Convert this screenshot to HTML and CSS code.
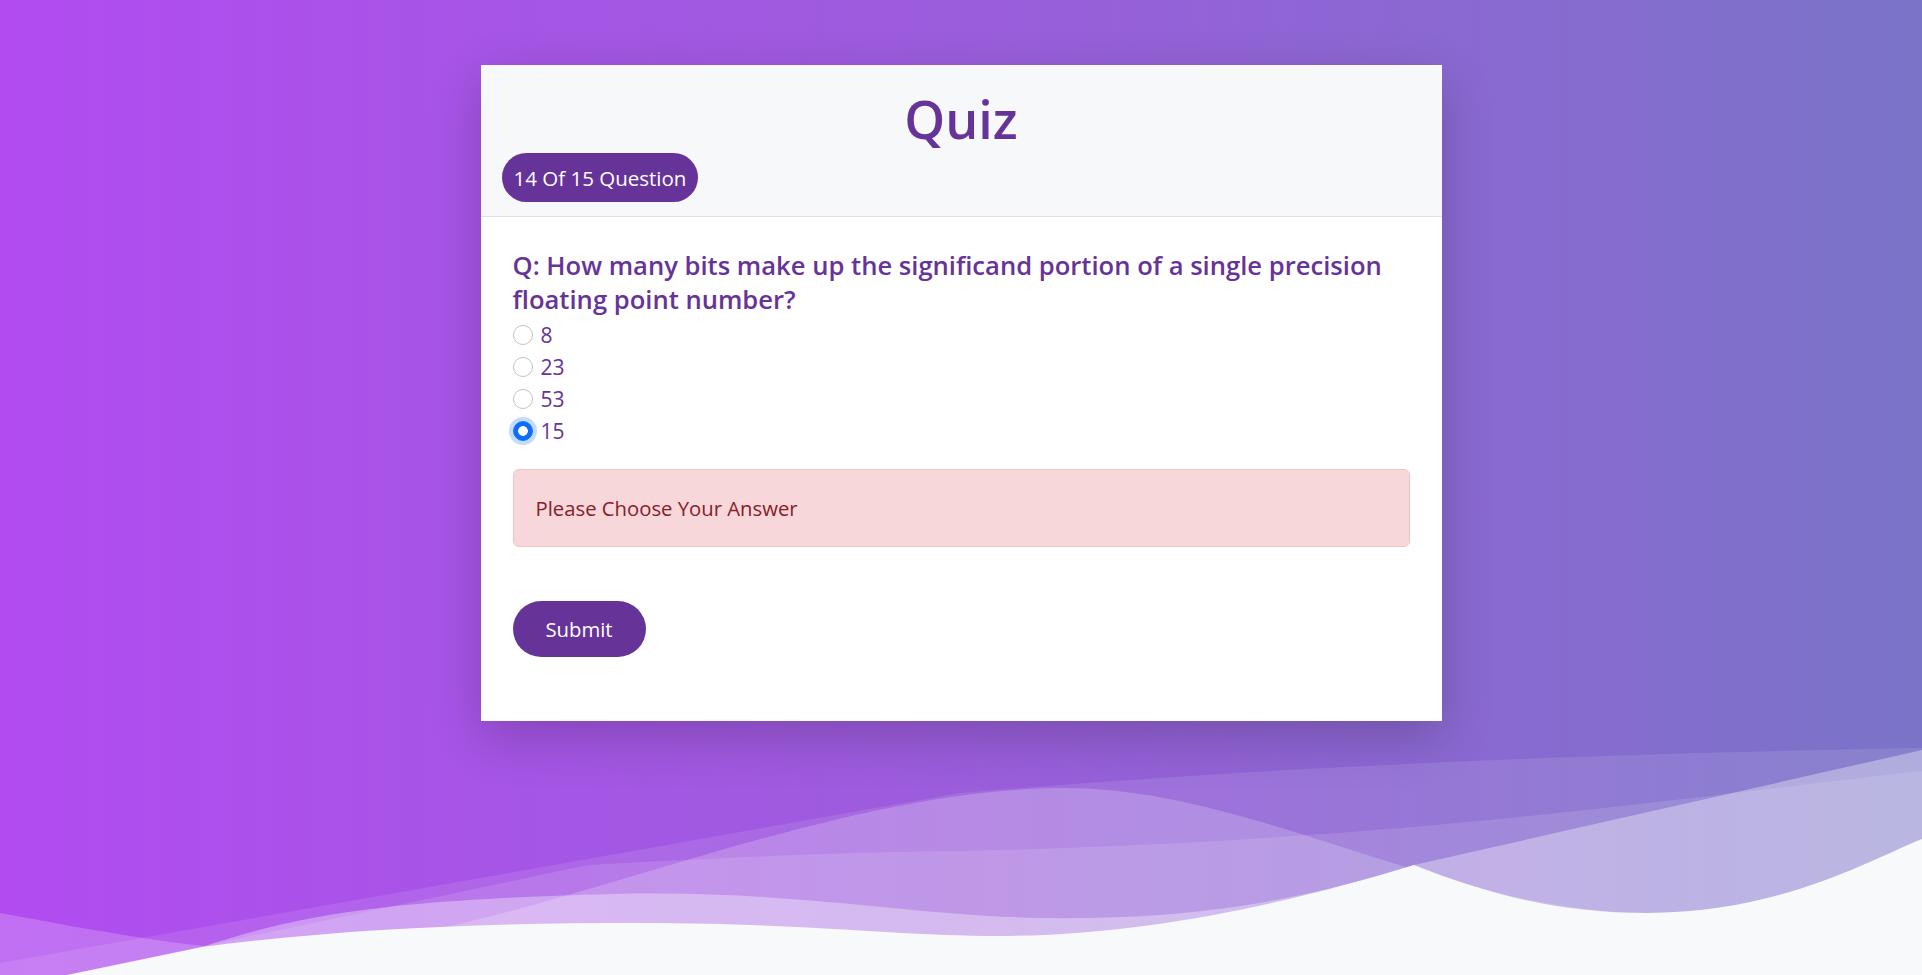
FILE: index.html
```html
<!DOCTYPE html>
<html lang="en">
<head>
<meta charset="utf-8">
<title>Quiz</title>
<link rel="stylesheet" href="styles.css">
</head>
<body>
<div class="page">
  <svg class="waves" viewBox="0 740 1922 235" preserveAspectRatio="none" aria-hidden="true">
    <path class="w-d" d="M0,963 L960,793 C1350,760 1700,752 1922,748 V975 H0 Z"/>
    <path class="w-s" d="M67,975 L588,865 C760,856 850,852 960,851 C1400,842 1700,795 1922,771 V975 Z"/>
    <path class="w-p" d="M0,913 C120,935 200,950 275,950 C500,950 800,790 1060,788 C1250,786 1450,913 1647,913 C1780,913 1870,860 1922,839 V975 H0 Z"/>
    <path class="w-e" d="M202,947 C300,915 380,900 612,894 C800,890 900,915 1040,918 C1200,920 1300,900 1414,865 L1922,750 V975 H202 Z"/>
    <path class="w-q" d="M67,975 L202,947 C350,928 480,923 640,923 C800,923 900,936 997,936 C1150,936 1300,900 1414,865 C1490,895 1560,913 1647,913 C1780,913 1870,860 1922,839 V975 Z"/>
  </svg>
  <main class="card">
    <header class="card-header">
      <h1 class="title">Quiz</h1>
      <span class="badge">14 Of 15 Question</span>
    </header>
    <section class="card-body">
      <h2 class="question">Q: How many bits make up the significand portion of a single precision floating point number?</h2>
      <div class="options">
        <label class="option"><input class="radio" type="radio" name="answer" value="8"><span>8</span></label>
        <label class="option"><input class="radio" type="radio" name="answer" value="23"><span>23</span></label>
        <label class="option"><input class="radio" type="radio" name="answer" value="53"><span>53</span></label>
        <label class="option"><input class="radio is-focused" type="radio" name="answer" value="15" checked><span>15</span></label>
      </div>
      <div class="alert">Please Choose Your Answer</div>
      <button class="submit" type="button">Submit</button>
    </section>
  </main>
</div>
</body>
</html>
```
FILE: styles.css
```css
html, body {
  margin: 0;
  padding: 0;
}

body {
  background: #f8f9fa;
  font-family: "Segoe UI", "Open Sans", "Noto Sans", sans-serif;
  color: #663399;
}

.page {
  position: relative;
  min-height: 975px;
  box-sizing: border-box;
  padding-top: 65px;
  overflow: hidden;
  background: linear-gradient(90deg, #b24cf1 0%, #9b5ddc 50%, #7a74c8 100%);
}

.waves {
  position: absolute;
  left: 0;
  bottom: 0;
  width: 100%;
  height: 235px;
  display: block;
}

.w-d { fill: rgba(255, 255, 255, 0.10); }
.w-s { fill: rgba(255, 255, 255, 0.12); }
.w-p { fill: rgba(255, 255, 255, 0.20); }
.w-e { fill: rgba(255, 255, 255, 0.34); }
.w-q { fill: #f8f9fa; }

.card {
  position: relative;
  z-index: 1;
  width: 50%;
  margin: 0 auto;
  background: #fff;
  box-shadow: 0 16px 48px rgba(0, 0, 0, 0.2);
}

.card-header {
  display: flex;
  flex-direction: column;
  align-items: flex-start;
  padding: 24px 21px 14px;
  background: #f7f8fa;
  border-bottom: 1px solid #e1dee8;
}

.title {
  align-self: stretch;
  margin: 0 0 4px;
  text-align: center;
  font-size: 52px;
  line-height: 60px;
  font-weight: 600;
  color: #663399;
}

.badge {
  display: inline-block;
  padding: 10px 12px 9px;
  border-radius: 999px;
  background: #663399;
  color: #fff;
  font-size: 20.5px;
  line-height: 30px;
  font-weight: 400;
}

.card-body {
  padding: 32px 32px 64px;
}

.question {
  margin: 0 0 2px;
  font-size: 25.6px;
  line-height: 34px;
  font-weight: 600;
  color: #663399;
}

.options {
  display: flex;
  flex-direction: column;
}

.option {
  display: flex;
  align-items: center;
  gap: 8px;
  height: 32px;
  font-size: 21px;
  line-height: 32px;
  color: #663399;
}

.radio {
  appearance: none;
  -webkit-appearance: none;
  flex: none;
  width: 20px;
  height: 20px;
  margin: 0;
  border: 1px solid #c3c3c6;
  border-radius: 50%;
  background: #fff;
  box-sizing: border-box;
}

.radio:checked {
  border-color: #0d6efd;
  background: radial-gradient(circle, #fff 0 4.5px, #0d6efd 5.2px);
}

.radio.is-focused {
  box-shadow: 0 0 0 4px rgba(13, 110, 253, 0.25);
}

.alert {
  margin-top: 22px;
  padding: 23px 22px;
  border: 1px solid #f5c2c7;
  border-radius: 6px;
  background: #f8d7da;
  color: #842029;
  font-size: 20.3px;
  line-height: 30px;
}

.submit {
  display: inline-block;
  margin-top: 54px;
  padding: 13px 33px;
  border: 0;
  border-radius: 999px;
  background: #663399;
  color: #fff;
  font-family: inherit;
  font-size: 20.3px;
  line-height: 30px;
  cursor: pointer;
}
```
